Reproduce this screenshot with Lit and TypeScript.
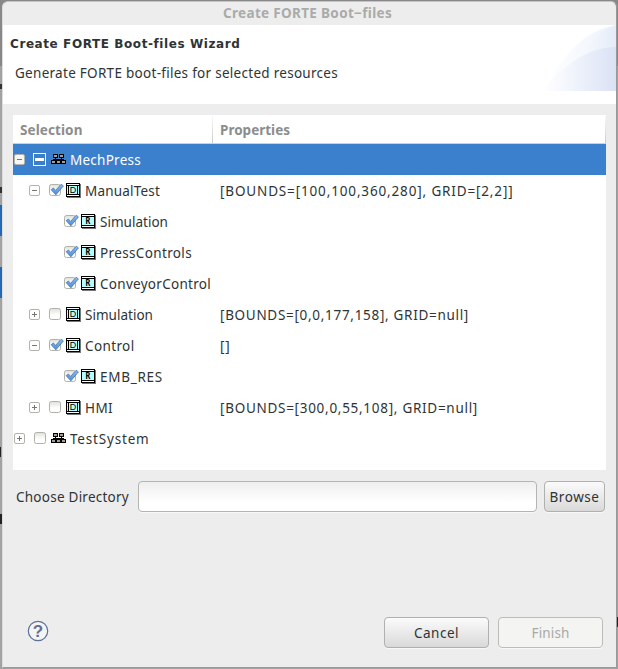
import { LitElement, html, css, svg, nothing } from "lit";
import { customElement, property, state } from "lit/decorators.js";

type Kind = "system" | "device" | "resource";
type Check = "partial" | "on" | "off";

interface Item {
  level: number;
  kind: Kind;
  check: Check;
  expander?: "open" | "closed";
  name: string;
  width: number;
  props?: string;
  propsWidth?: number;
  selected?: boolean;
}

const items: Item[] = [
  { level: 0, kind: "system", check: "partial", expander: "open", name: "MechPress", width: 71, selected: true },
  { level: 1, kind: "device", check: "on", expander: "open", name: "ManualTest", width: 75, props: "[BOUNDS=[100,100,360,280], GRID=[2,2]]", propsWidth: 293.5 },
  { level: 2, kind: "resource", check: "on", name: "Simulation", width: 68 },
  { level: 2, kind: "resource", check: "on", name: "PressControls", width: 92 },
  { level: 2, kind: "resource", check: "on", name: "ConveyorControl", width: 111 },
  { level: 1, kind: "device", check: "off", expander: "closed", name: "Simulation", width: 68, props: "[BOUNDS=[0,0,177,158], GRID=null]", propsWidth: 249 },
  { level: 1, kind: "device", check: "on", expander: "open", name: "Control", width: 49.5, props: "[]", propsWidth: 10.5 },
  { level: 2, kind: "resource", check: "on", name: "EMB_RES", width: 63 },
  { level: 1, kind: "device", check: "off", expander: "closed", name: "HMI", width: 28, props: "[BOUNDS=[300,0,55,108], GRID=null]", propsWidth: 258 },
  { level: 0, kind: "system", check: "off", expander: "closed", name: "TestSystem", width: 79.5 },
];

/** A single line of text whose tracking is set so that it spans a given width. */
@customElement("fit-text")
class FitText extends LitElement {
  @property() text = "";
  @property({ type: Number }) width = 0;
  @state() private tracking = 0;

  static styles = css`
    :host { display: inline-block; white-space: pre; }
  `;

  firstUpdated() {
    const span = this.renderRoot.querySelector("span")!;
    const natural = span.getBoundingClientRect().width;
    this.tracking = (this.width - natural) / this.text.length;
  }

  render() {
    return html`<span style="letter-spacing:${this.tracking}px">${this.text}</span>`;
  }
}

@customElement("tree-icon")
class TreeIcon extends LitElement {
  @property() kind: Kind = "system";

  static styles = css`
    :host { display: block; }
    svg { display: block; }
    .letter { font: bold 8px "DejaVu Sans Mono", monospace; }
    .letter.device { font-size: 9px; font-family: "Liberation Sans", sans-serif; font-weight: 400; }
  `;

  private box(x: number, y: number) {
    return svg`<rect x=${x} y=${y} width="5" height="4" fill="#000"/><rect x=${x + 1} y=${y + 1} width="3" height="2" fill="#a89c94"/>`;
  }

  render() {
    if (this.kind === "system") {
      return html`<svg width="15" height="11" viewBox="0 0 15 11" shape-rendering="crispEdges">
        ${this.box(2, 0)}${this.box(8, 0)}
        <path d="M4 4h1v1h-1zM10 4h1v1h-1zM2 5h5v1H2zM8 5h5v1H8zM1 6h2v1H1zM6 5h3v2H6zM12 6h2v1h-2z"/>
        ${this.box(0, 6)}${this.box(5, 6)}${this.box(10, 6)}
      </svg>`;
    }
    const device = this.kind === "device";
    return html`<svg width="15" height="15" viewBox="0 0 15 15" shape-rendering="crispEdges">
      <path d="M1 1h14v14H1z" fill="#777"/>
      <path d="M0 0h14v14H0z"/>
      <path d="M1 1h12v12H1z" fill="#b4ffff"/>
      <path d="M1 1h12v1H1zM1 12h12v1H1z" fill="#fff"/>
      <path d="M1 2h12v1H1zM1 11h12v1H1z"/>
      ${device ? svg`<path d="M2 3h1v8H2zM11 3h1v8h-1z"/>` : nothing}
      <text class="letter ${this.kind}" x="7" y="10" text-anchor="middle">${device ? "D" : "R"}</text>
    </svg>`;
  }
}

@customElement("tree-check")
class TreeCheck extends LitElement {
  @property() value: Check = "off";

  static styles = css`
    :host { display: block; width: 17px; height: 15px; }
    svg { display: block; overflow: visible; }
  `;

  render() {
    if (this.value === "partial") {
      return html`<svg width="17" height="15" shape-rendering="crispEdges">
        <path d="M-1 1h13v13H-1z" fill="#fff"/><path d="M0 2h11v11H0z" fill="#3a7fca"/><path d="M1 6h9v3H1z" fill="#fff"/>
      </svg>`;
    }
    return html`<svg width="17" height="15">
      <defs>
        <linearGradient id="g" x2="0" y2="1"><stop stop-color="#e0e0da"/><stop offset=".6" stop-color="#fff"/></linearGradient>
        <linearGradient id="b" x2="0" y2="1"><stop stop-color="#8fbdec"/><stop offset="1" stop-color="#4c8dd8"/></linearGradient>
      </defs>
      <rect x=".5" y="1.5" width="11" height="11" rx="2" fill="url(#g)" stroke="#b2b1a9"/>
      ${this.value === "on"
        ? svg`<path d="M2.2 6.7 4.4 5 6.6 7.4 12.2 1.2 14.4 2.9 6.9 11.8Z" fill="url(#b)" stroke="#3f72b0" stroke-width=".8" stroke-linejoin="round"/>`
        : nothing}
    </svg>`;
  }
}

@customElement("app-root")
class AppRoot extends LitElement {
  static styles = css`
    :host {
      display: block; box-sizing: border-box; width: 618px; height: 669px; padding: 1px 1px 1px 2px; overflow: hidden;
      font: 13.5px "Noto Sans", sans-serif; color: #2e3436;
      background:
        linear-gradient(#2467b5, #2467b5) 0 205px / 2px 31px no-repeat,
        linear-gradient(#2467b5, #2467b5) 0 267px / 2px 31px no-repeat,
        linear-gradient(#222, #222) 0 514px / 2px 10px no-repeat,
        linear-gradient(#222, #222) 617px 617px / 1px 10px no-repeat,
        linear-gradient(#222, #222) 0 447px / 1px 10px no-repeat,
        linear-gradient(#333, #333) 0 187px / 2px 6px no-repeat,
        linear-gradient(#333, #333) 0 84px / 2px 5px no-repeat,
        linear-gradient(#888, #888) 0 0 / 618px 66px no-repeat,
        #a2a2a2;
    }
    * { box-sizing: border-box; }
    .dialog { display: flex; flex-direction: column; width: 615px; height: 667px; background: #ededed; border: 1px solid #999; border-top-color: #c5c5c5; border-left-color: #ddd; border-radius: 6px 6px 0 0; overflow: hidden; }
    .title { height: 23px; line-height: 23px; padding-left: 220px; font-weight: 700; color: #a9aba9; }
    .banner { display: flex; justify-content: space-between; height: 79px; background: #fff; }
    .words { padding-left: 7px; }
    .heading { height: 36px; font: 700 12px/39px "DejaVu Sans", sans-serif; }
    .sub { height: 24px; line-height: 24px; padding-left: 5px; }
    .wave { display: block; }
    .tree { width: 593px; height: 355px; margin: 11px 0 0 10px; background: #fff; }
    .head { display: flex; height: 29px; border-bottom: 1px solid #d0d0d0; font-weight: 700; color: #8b8d8d; line-height: 31px; }
    .col { padding-left: 7px; border-right: 1px solid; border-image: linear-gradient(#fff, #c8c8c8) 1; }
    .col.first { width: 200px; flex: none; }
    .col.rest { flex: 1; }
    .row { display: flex; height: 31px; line-height: 33px; }
    .row.selected { background: #3a80cc; color: #fff; }
    .cell { display: flex; width: 207px; flex: none; }
    .indent { flex: none; }
    .expander { width: 11px; height: 11px; margin: 10px 9px 0 1px; flex: none; }
    .expander svg { display: block; }
    .check { margin-top: 8px; flex: none; }
    .icon { width: 19px; margin-top: 8px; flex: none; }
    .icon.system { margin-top: 10px; }
    .directory { display: flex; height: 31px; margin: 11px 0 0 13px; line-height: 33px; }
    .directory .caption { width: 122px; }
    .entry { width: 399px; height: 31px; margin-right: 7px; border: 1px solid #b4b5b2; border-radius: 4px; background: linear-gradient(#efefef, #fff 70%); box-shadow: 0 1px #f8f8f8; }
    .button { display: flex; justify-content: center; height: 31px; line-height: 31px; border: 1px solid #b0b1ae; border-radius: 4px; background: linear-gradient(#fbfbfb, #d9d9d9); box-shadow: 0 1px #f8f8f8; }
    .browse { width: 61px; }
    .wide { width: 105px; }
    .disabled { color: #a9aaa8; background: #f4f4f2; border-color: #bcbdba; }
    .footer { display: flex; gap: 9px; margin: 105px 13px 0 24px; }
    .help { margin: 3px auto 0 0; }
    .mark { font: 700 17px "Liberation Sans", sans-serif; }
  `;

  private row(i: Item) {
    return html`<div class="row ${i.selected ? "selected" : ""}">
      <div class="cell">
        <div class="indent" style="width:${i.level * 15}px"></div>
        <div class="expander">${i.expander
          ? html`<svg width="11" height="11">
              <rect x=".5" y=".5" width="10" height="10" rx="1.5" fill=${i.selected ? "#f7f7f4" : "#fff"} stroke="#b3b2ab"/>
              <path d=${i.expander === "open" ? "M3 5.5h5" : "M3 5.5h5M5.5 3v5"} stroke="#777770"/>
            </svg>`
          : nothing}</div>
        <tree-check class="check" value=${i.check}></tree-check>
        <tree-icon class="icon ${i.kind}" kind=${i.kind}></tree-icon>
        <fit-text text=${i.name} width=${i.width}></fit-text>
      </div>
      ${i.props ? html`<fit-text text=${i.props} width=${i.propsWidth!}></fit-text>` : nothing}
    </div>`;
  }

  render() {
    return html`<div class="dialog">
      <div class="title"><fit-text text="Create FORTE Boot−files" width="169"></fit-text></div>
      <div class="banner">
        <div class="words">
          <div class="heading"><fit-text text="Create FORTE Boot-files Wizard" width="230"></fit-text></div>
          <div class="sub"><fit-text text="Generate FORTE boot-files for selected resources" width="323"></fit-text></div>
        </div>
        <svg class="wave" width="75" height="66" viewBox="0 0 75 66">
          <defs>
            <linearGradient id="a"><stop stop-color="#fff"/><stop offset="1" stop-color="#e2eaf8"/></linearGradient>
            <linearGradient id="c"><stop stop-color="#fff"/><stop offset=".3" stop-color="#f5f8fd"/><stop offset="1" stop-color="#dae2f5"/></linearGradient>
          </defs>
          <path d="M3 66C20 32 43 5 75 0V66Z" fill="url(#a)" opacity=".6"/>
          <path d="M28 66C36 34 50 8 75 0V66Z" fill="url(#a)" opacity=".8"/>
          <path d="M0 66C20 44 44 22 75 22V66Z" fill="url(#c)"/>
        </svg>
      </div>
      <div class="tree">
        <div class="head">
          <div class="col first"><fit-text text="Selection" width="62.5"></fit-text></div>
          <div class="col rest"><fit-text text="Properties" width="70"></fit-text></div>
        </div>
        ${items.map((i) => this.row(i))}
      </div>
      <div class="directory">
        <div class="caption"><fit-text text="Choose Directory" width="113"></fit-text></div>
        <div class="entry"></div>
        <div class="button browse"><fit-text text="Browse" width="50"></fit-text></div>
      </div>
      <div class="footer">
        <svg class="help" width="22" height="22" viewBox="0 0 22 22">
          <circle cx="11" cy="11" r="9.7" fill="#f3f4f6" stroke="#5f7195" stroke-width="1.2"/>
          <text class="mark" x="11" y="17" text-anchor="middle" fill="#5f7195">?</text>
        </svg>
        <div class="button wide"><fit-text text="Cancel" width="45"></fit-text></div>
        <div class="button wide disabled"><fit-text text="Finish" width="38"></fit-text></div>
      </div>
    </div>`;
  }
}
